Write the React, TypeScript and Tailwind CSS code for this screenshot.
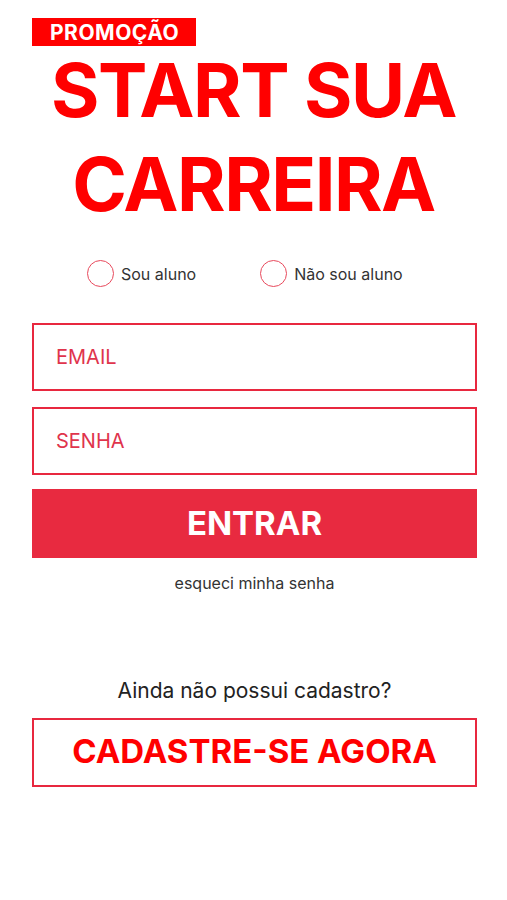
import React from "react";

const font = { fontFamily: "Inter, 'Noto Sans', sans-serif" };

function Radio({ label }: { label: string }) {
  return (
    <label className="flex items-center gap-[7px] cursor-pointer">
      <span className="block w-[27px] h-[27px] rounded-full border-[1.5px] border-[#e8495c]" />
      <span className="text-[16px] text-[#333]">{label}</span>
    </label>
  );
}

export default function App() {
  return (
    <div className="w-[507px] h-[900px] bg-white" style={font}>
      <div className="pt-[18px] px-[32px]">
        <div className="w-[164px] h-[28px] bg-[#ff0000] flex items-center pl-[18px]">
          <span className="text-white font-bold text-[21px] leading-none tracking-[0.5px]">PROMOÇÃO</span>
        </div>
      </div>

      <h1 className="text-center text-[#ff0000] font-bold text-[74px] leading-[94px] mt-[-3px] tracking-[-1.5px]">
        START SUA
        <br />
        CARREIRA
      </h1>

      <div className="flex gap-[64px] mt-[29px] pl-[87px]">
        <Radio label="Sou aluno" />
        <Radio label="Não sou aluno" />
      </div>

      <div className="pl-[32px] pr-[30px] mt-[36px] flex flex-col">
        <div className="h-[68px] border-2 border-[#e8283f] flex items-center pl-[22px]">
          <span className="text-[20px] text-[#e0344c]">EMAIL</span>
        </div>
        <div className="h-[68px] border-2 border-[#e8283f] flex items-center pl-[22px] mt-[16px]">
          <span className="text-[20px] text-[#e0344c]">SENHA</span>
        </div>
        <button className="h-[69px] bg-[#e82a40] mt-[14px] text-white font-bold text-[33px]">
          ENTRAR
        </button>
        <p className="text-center text-[16px] text-[#333] mt-[13px]">esqueci minha senha</p>

        <p className="text-center text-[21px] text-[#222] mt-[80px]">Ainda não possui cadastro?</p>
        <button className="h-[69px] border-2 border-[#e8283f] mt-[11px] text-[#ff0000] font-bold text-[33px]">
          CADASTRE-SE AGORA
        </button>
      </div>
    </div>
  );
}
